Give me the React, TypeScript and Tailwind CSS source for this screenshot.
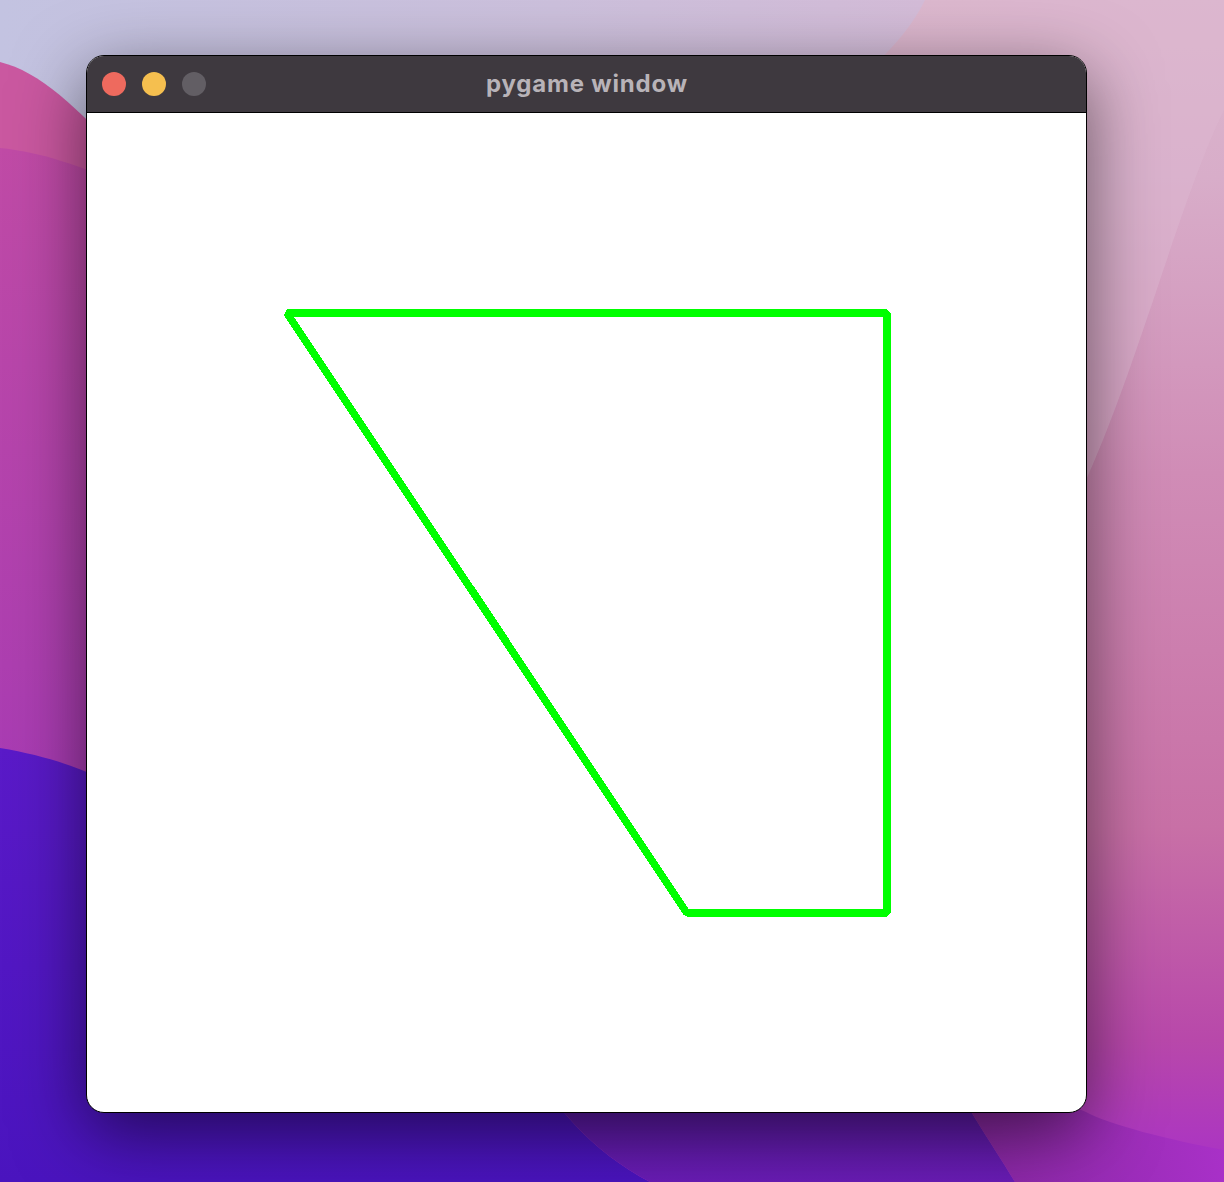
import React from "react";

/* ------------------------------- wallpaper -------------------------------- */
function Wallpaper() {
  return (
    <svg className="absolute inset-0" width="1224" height="1182" viewBox="0 0 1224 1182">
      <defs>
        <linearGradient id="base" x1="0" y1="0" x2="0" y2="1">
          <stop offset="0" stopColor="#dcb8ce" />
          <stop offset="0.15" stopColor="#d8adc9" />
          <stop offset="0.4" stopColor="#d08cb6" />
          <stop offset="0.7" stopColor="#c870a6" />
          <stop offset="0.88" stopColor="#b848aa" />
          <stop offset="1" stopColor="#a830c8" />
        </linearGradient>
        <linearGradient id="lav" x1="0" y1="0" x2="1" y2="0">
          <stop offset="0" stopColor="#c3c3e1" />
          <stop offset="0.6" stopColor="#ccc0dc" />
          <stop offset="1" stopColor="#d4bcd8" />
        </linearGradient>
        <linearGradient id="band" x1="0" y1="0" x2="0" y2="1">
          <stop offset="0" stopColor="#c04ba6" />
          <stop offset="0.5" stopColor="#ad3fb0" />
          <stop offset="1" stopColor="#972ec0" />
        </linearGradient>
        <linearGradient id="blue" x1="0" y1="0" x2="0" y2="1">
          <stop offset="0" stopColor="#5a1ac8" />
          <stop offset="1" stopColor="#4a14be" />
        </linearGradient>
        <linearGradient id="mid" x1="0" y1="0" x2="0" y2="1">
          <stop offset="0" stopColor="#4c1898" />
          <stop offset="1" stopColor="#6a1cb6" />
        </linearGradient>
        <linearGradient id="rightlow" x1="0" y1="0" x2="1" y2="0">
          <stop offset="0" stopColor="#7e2498" />
          <stop offset="1" stopColor="#a830c8" />
        </linearGradient>
      </defs>
      <rect width="1224" height="1182" fill="url(#base)" />
      <path d="M1000,0 H1224 V110 C1180,200 1140,360 1086,480 L1000,480 Z" fill="#ddb6cf" opacity="0.55" />
      <path d="M0,0 H925 C910,30 880,70 800,120 L0,120 Z" fill="url(#lav)" />
      <path d="M0,62 C40,72 75,105 130,165 L130,1182 L0,1182 Z" fill="#ca58a0" />
      <path d="M0,148 C40,152 80,165 130,188 L130,1182 L0,1182 Z" fill="url(#band)" />
      <path d="M0,748 C60,758 100,775 140,800 L500,1000 C540,1100 590,1150 650,1182 L0,1182 Z" fill="url(#blue)" />
      <path d="M500,1000 C540,1100 590,1150 650,1182 L1015,1182 C990,1140 960,1100 940,1050 Z" fill="url(#mid)" />
      <path d="M940,1050 C960,1100 990,1140 1015,1182 L1224,1182 L1224,1150 C1170,1140 1110,1125 1086,1112 Z" fill="url(#rightlow)" opacity="0.85" />
    </svg>
  );
}

/* --------------------------------- canvas --------------------------------- */
function GameCanvas() {
  return (
    <svg width="999" height="999" viewBox="0 0 999 999" className="block">
      <polygon
        points="200,200 800,200 800,800 600,800"
        fill="none"
        stroke="#00ff00"
        strokeWidth="7.5"
        strokeLinejoin="bevel"
        shapeRendering="crispEdges"
      />
    </svg>
  );
}

/* --------------------------------- window --------------------------------- */
function TitleBar() {
  return (
    <div className="grid h-[57px] grid-cols-[1fr_auto_1fr] items-center border-b border-black bg-[#3e393f] px-[15px]">
      <div className="flex items-center gap-4">
        <span className="h-6 w-6 rounded-full bg-[#ee6a5e]" />
        <span className="h-6 w-6 rounded-full bg-[#f5bf4f]" />
        <span className="h-6 w-6 rounded-full bg-[#625e64]" />
      </div>
      <div className="pl-[1px] text-[24px] font-bold tracking-[0.8px] text-[#b8b3b8] [font-family:Inter,'Liberation_Sans',sans-serif]">
        pygame window
      </div>
      <div />
    </div>
  );
}

export default function App() {
  return (
    <div className="relative h-[1182px] w-[1224px] overflow-hidden">
      <Wallpaper />
      <div className="relative pl-[86px] pt-[55px]">
        <div className="w-[1001px] overflow-hidden rounded-[18px] border border-black bg-white shadow-[0_20px_70px_rgba(0,0,0,0.55)]">
          <TitleBar />
          <GameCanvas />
        </div>
      </div>
    </div>
  );
}
